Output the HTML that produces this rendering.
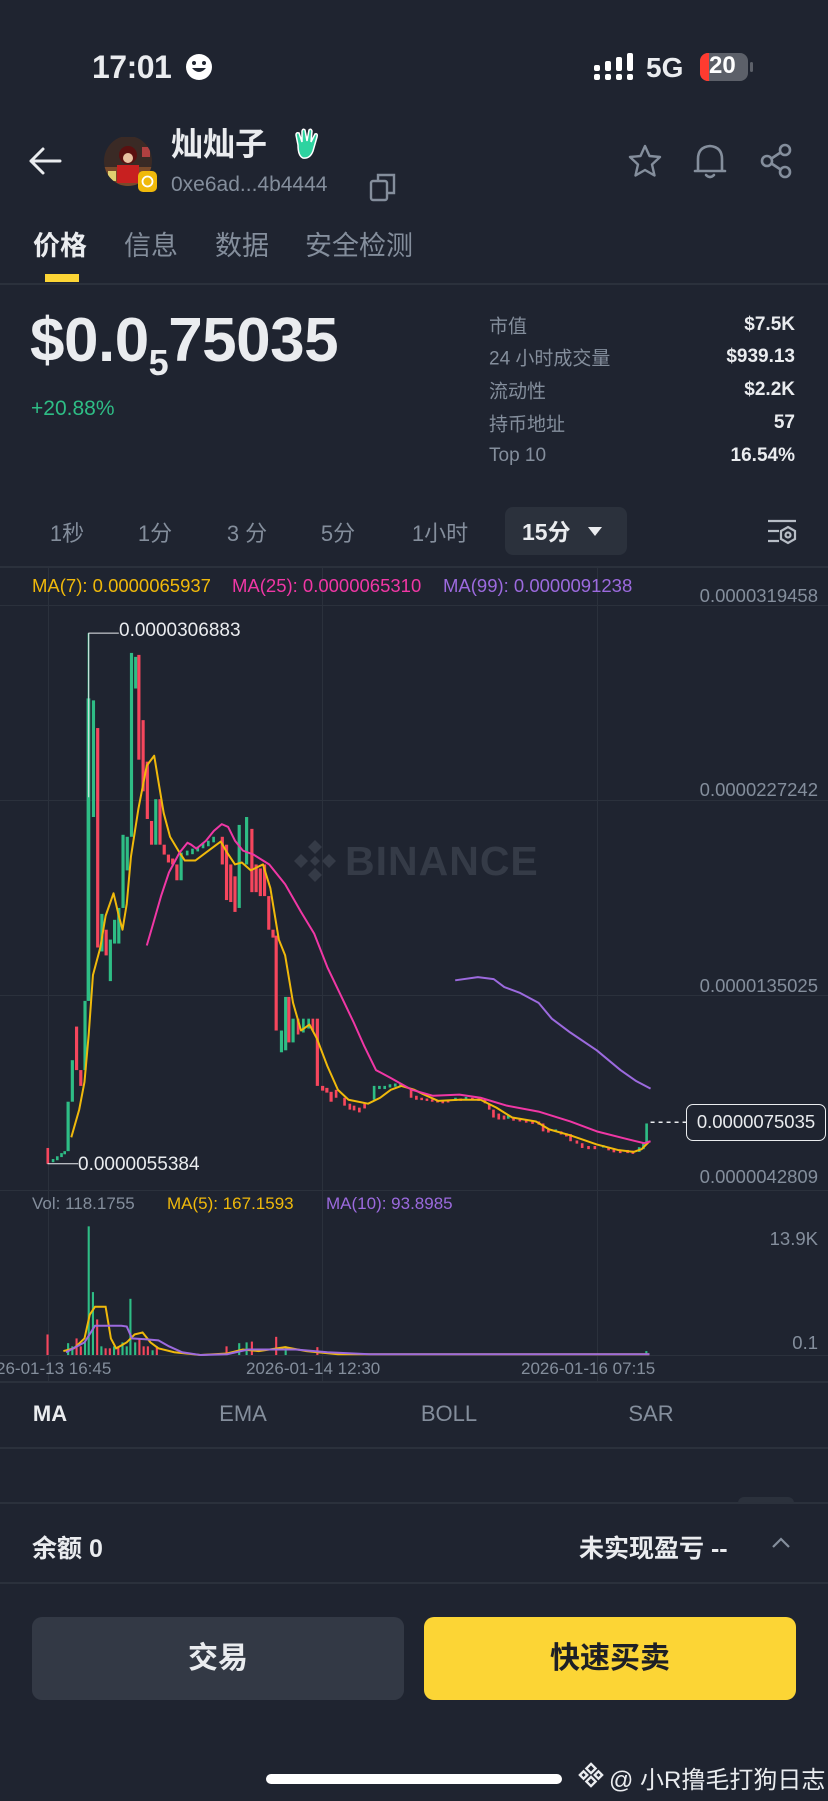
<!DOCTYPE html>
<html><head><meta charset="utf-8">
<style>
*{margin:0;padding:0;box-sizing:border-box}
body{width:828px;height:1801px;background:#1f2430;overflow:hidden;position:relative;font-family:"Liberation Sans","Noto Sans CJK SC",sans-serif;color:#eaecef}
.a{position:absolute;white-space:nowrap}
.g{color:#848e9c}
.line{position:absolute;left:0;width:828px;height:2px;background:#2b313c}
.lbl{position:absolute;left:489px;font-size:19px;color:#848e9c;transform:translateY(-50%)}
.val{position:absolute;right:33px;font-size:19px;color:#eaecef;transform:translateY(-50%);font-weight:bold}
.tf{position:absolute;top:532px;transform:translate(-50%,-50%);font-size:22px;color:#848e9c}
.ax{position:absolute;right:10px;font-size:18.5px;color:#848e9c;transform:translateY(-50%)}
.tab2{position:absolute;top:1414px;transform:translate(-50%,-50%);font-size:22px;color:#848e9c}
</style></head><body>

<!-- status bar -->
<div class="a" style="left:92px;top:49px;font-size:32px;font-weight:bold;letter-spacing:-0.5px">17:01</div>
<svg class="a" style="left:184px;top:52px" width="30" height="30" viewBox="0 0 30 30"><circle cx="15" cy="15" r="13" fill="#fff"/><circle cx="10" cy="11" r="2" fill="#1f2430"/><circle cx="20" cy="11" r="2" fill="#1f2430"/><path d="M8 16 Q15 24 22 16 Z" fill="#1f2430"/></svg>
<svg class="a" style="left:594px;top:53px" width="42" height="28" viewBox="0 0 42 28"><g fill="#fff"><rect x="0" y="12" width="6" height="6" rx="2"/><rect x="0" y="21" width="6" height="6" rx="2"/><rect x="11" y="8" width="6" height="10" rx="2"/><rect x="11" y="21" width="6" height="6" rx="2"/><rect x="22" y="4" width="6" height="14" rx="2"/><rect x="22" y="21" width="6" height="6" rx="2"/><rect x="33" y="0" width="6" height="18" rx="2"/><rect x="33" y="21" width="6" height="6" rx="2"/></g></svg>
<div class="a" style="left:646px;top:52px;font-size:28px;font-weight:bold">5G</div>
<div class="a" style="left:700px;top:53px;width:48px;height:28px;border-radius:8px;background:#5c6069;overflow:hidden"><div style="width:9px;height:28px;background:#ff3b30"></div></div>
<div class="a" style="left:709px;top:52px;font-size:24px;font-weight:bold;color:#fff">20</div>
<div class="a" style="left:750px;top:62px;width:3px;height:10px;border-radius:2px;background:#5c6069"></div>

<!-- header -->
<svg class="a" style="left:28px;top:146px" width="34" height="30" viewBox="0 0 34 30"><path d="M32 15H3M15 3L3 15L15 27" stroke="#eaecef" stroke-width="3" fill="none" stroke-linecap="round" stroke-linejoin="round"/></svg>
<svg class="a" style="left:104px;top:137px" width="56" height="56" viewBox="0 0 56 56"><defs><clipPath id="c"><ellipse cx="24" cy="24" rx="24" ry="25"/></clipPath></defs><g clip-path="url(#c)"><rect width="56" height="56" fill="#3a2a25"/><rect x="0" y="30" width="56" height="26" fill="#7a4a2a"/><circle cx="24" cy="18" r="9" fill="#5a1010"/><circle cx="24" cy="21" r="5" fill="#e7c0a0"/><rect x="13" y="28" width="22" height="18" fill="#c82020"/><rect x="4" y="34" width="8" height="10" fill="#e0d070"/><rect x="38" y="10" width="8" height="10" fill="#b04040"/></g><rect x="34" y="34" width="19" height="21" rx="5" fill="#f0b90b"/><circle cx="43.5" cy="44.5" r="5" fill="none" stroke="#fff" stroke-width="1.8"/></svg>
<div class="a" style="left:171px;top:119px;font-size:32px;font-weight:bold">灿灿子</div>
<svg class="a" style="left:293px;top:127px" width="30" height="34" viewBox="0 0 30 34"><path d="M5 18 L3 8 Q3 5 6 6 L9 15 L9 4 Q10 1 12 3 L14 14 L16 3 Q18 1 19 4 L18 15 L22 7 Q25 6 24 10 L20 24 Q17 32 10 31 Q5 29 5 18Z" fill="#2ed3a0" stroke="#fff" stroke-width="1.5"/></svg>
<div class="a g" style="left:171px;top:173px;font-size:21px">0xe6ad...4b4444</div>
<svg class="a" style="left:369px;top:172px" width="28" height="30" viewBox="0 0 28 30"><rect x="2" y="9" width="16" height="19" rx="2" fill="none" stroke="#848e9c" stroke-width="2.4"/><path d="M9 8V3h16v18h-6" fill="none" stroke="#848e9c" stroke-width="2.4"/></svg>
<svg class="a" style="left:627px;top:143px" width="36" height="36" viewBox="0 0 36 36"><path d="M18 3l4.5 10 10.5 1-8 7.5 2.5 11L18 27l-9.5 5.5 2.5-11-8-7.5 10.5-1z" fill="none" stroke="#848e9c" stroke-width="2.4" stroke-linejoin="round"/></svg>
<svg class="a" style="left:692px;top:141px" width="36" height="40" viewBox="0 0 36 40"><path d="M6 30V18Q6 6 18 5Q30 6 30 18V30H6ZM3 30H33M14 34Q18 38 22 34" fill="none" stroke="#848e9c" stroke-width="2.6" stroke-linejoin="round" stroke-linecap="round"/></svg>
<svg class="a" style="left:758px;top:141px" width="36" height="40" viewBox="0 0 36 40"><g fill="none" stroke="#848e9c" stroke-width="2.6"><circle cx="27" cy="9" r="5"/><circle cx="9" cy="20" r="5"/><circle cx="27" cy="31" r="5"/><path d="M13.5 17.5L22.5 11.5M13.5 22.5L22.5 28.5"/></g></svg>

<!-- tabs -->
<div class="a" style="left:33px;top:224px;font-size:27px;font-weight:bold">价格</div>
<div class="a g" style="left:124px;top:224px;font-size:27px">信息</div>
<div class="a g" style="left:215px;top:224px;font-size:27px">数据</div>
<div class="a g" style="left:305px;top:224px;font-size:27px">安全检测</div>
<div class="a" style="left:45px;top:274px;width:34px;height:8px;background:#fcd535"></div>
<div class="line" style="top:283px"></div>

<!-- price -->
<div class="a" style="left:30px;top:305px;font-size:62px;font-weight:bold;letter-spacing:-0.5px">$0.0<span style="font-size:36px;position:relative;top:14px">5</span>75035</div>
<div class="a" style="left:31px;top:397px;font-size:21px;color:#2ebd85">+20.88%</div>

<div class="lbl" style="top:325px">市值</div><div class="val" style="top:325px">$7.5K</div>
<div class="lbl" style="top:357px">24 小时成交量</div><div class="val" style="top:357px">$939.13</div>
<div class="lbl" style="top:390px">流动性</div><div class="val" style="top:390px">$2.2K</div>
<div class="lbl" style="top:423px">持币地址</div><div class="val" style="top:423px">57</div>
<div class="lbl" style="top:456px">Top 10</div><div class="val" style="top:456px">16.54%</div>

<!-- timeframe -->
<div class="tf" style="left:67px">1秒</div>
<div class="tf" style="left:155px">1分</div>
<div class="tf" style="left:247px">3 分</div>
<div class="tf" style="left:338px">5分</div>
<div class="tf" style="left:440px">1小时</div>
<div class="a" style="left:505px;top:507px;width:122px;height:48px;border-radius:8px;background:#2b313c"></div>
<div class="a" style="left:522px;top:517px;font-size:23px;font-weight:bold;line-height:30px">15分</div>
<svg class="a" style="left:587px;top:526px" width="16" height="12" viewBox="0 0 16 12"><path d="M1 1H15L8 10Z" fill="#eaecef"/></svg>
<svg class="a" style="left:766px;top:518px" width="32" height="30" viewBox="0 0 32 30"><g fill="none" stroke="#b7bdc6" stroke-width="2.2"><path d="M2 3H30M2 13H13M2 23H13"/><path d="M22 9l7 4v8l-7 4-7-4v-8z"/><circle cx="22" cy="17" r="2.5"/></g></svg>

<div class="line" style="top:566px;height:2px"></div>

<!-- grid + chart -->
<div class="a" style="left:48px;top:568px;width:1px;height:813px;background:#2b313c"></div>
<div class="a" style="left:322px;top:568px;width:1px;height:813px;background:#2b313c"></div>
<div class="a" style="left:597px;top:568px;width:1px;height:813px;background:#2b313c"></div>
<div class="line" style="top:605px;height:1px"></div>
<div class="line" style="top:800px;height:1px"></div>
<div class="line" style="top:995px;height:1px"></div>
<div class="line" style="top:1190px;height:1px"></div>
<div class="line" style="top:1355px;height:1px"></div>
<div class="line" style="top:1381px;height:2px"></div>

<svg class="a" style="left:292px;top:838px" width="46" height="46" viewBox="0 0 46 46"><g fill="#353b47"><path d="M23 2l7 7-7 7-7-7z"/><path d="M23 30l7 7-7 7-7-7z"/><path d="M9 16l7 7-7 7-7-7z"/><path d="M37 16l7 7-7 7-7-7z"/><path d="M23 18l5 5-5 5-5-5z"/></g></svg>
<div class="a" style="left:345px;top:838px;font-size:41px;font-weight:bold;color:#353b47;letter-spacing:1px">BINANCE</div>

<svg class="a" style="left:0;top:560px" width="828" height="620" viewBox="0 0 1568 1568" preserveAspectRatio="none">
<g stroke-width="2" vector-effect="non-scaling-stroke">
<g fill="#2ebd85">
<rect x="98" y="1515" width="5" height="8"/><rect x="106" y="1508" width="5" height="10"/><rect x="114" y="1500" width="5" height="10"/><rect x="120" y="1495" width="5" height="8"/>
<rect x="126" y="1370" width="6" height="125"/><rect x="134" y="1265" width="6" height="105"/><rect x="158" y="1115" width="6" height="175"/>
<rect x="166" y="185" width="3" height="930"/><rect x="164" y="350" width="7" height="765"/><rect x="174" y="355" width="6" height="295"/>
<rect x="190" y="895" width="6" height="95"/><rect x="206" y="960" width="6" height="105"/><rect x="214" y="910" width="6" height="60"/><rect x="222" y="880" width="6" height="90"/><rect x="230" y="695" width="6" height="185"/><rect x="238" y="700" width="6" height="85"/><rect x="246" y="235" width="6" height="465"/><rect x="254" y="245" width="6" height="80"/>
<rect x="292" y="605" width="6" height="115"/><rect x="340" y="740" width="6" height="70"/>
<rect x="352" y="735" width="5" height="12"/><rect x="362" y="730" width="5" height="14"/><rect x="372" y="725" width="5" height="12"/><rect x="382" y="715" width="5" height="14"/><rect x="392" y="710" width="5" height="14"/><rect x="402" y="700" width="5" height="14"/>
<rect x="450" y="670" width="6" height="210"/><rect x="464" y="650" width="6" height="120"/>
<rect x="530" y="1190" width="6" height="55"/><rect x="538" y="1105" width="6" height="135"/><rect x="552" y="1160" width="6" height="60"/><rect x="572" y="1160" width="5" height="35"/><rect x="582" y="1160" width="5" height="25"/>
<rect x="706" y="1330" width="5" height="35"/><rect x="716" y="1330" width="5" height="8"/><rect x="726" y="1330" width="5" height="8"/><rect x="736" y="1326" width="5" height="8"/><rect x="746" y="1324" width="5" height="8"/><rect x="756" y="1324" width="5" height="8"/>
<rect x="860" y="1360" width="5" height="8"/><rect x="880" y="1358" width="5" height="8"/><rect x="960" y="1405" width="5" height="8"/><rect x="1050" y="1440" width="5" height="6"/><rect x="1140" y="1480" width="5" height="6"/><rect x="1208" y="1485" width="5" height="12"/><rect x="1216" y="1475" width="5" height="15"/>
<rect x="1222" y="1425" width="5" height="50"/>
</g>
<g fill="#f6465d">
<rect x="88" y="1487" width="5" height="40"/><rect x="142" y="1180" width="6" height="110"/><rect x="150" y="1290" width="6" height="40"/>
<rect x="182" y="425" width="6" height="555"/><rect x="198" y="935" width="6" height="65"/>
<rect x="260" y="240" width="6" height="265"/><rect x="268" y="405" width="6" height="180"/><rect x="276" y="510" width="6" height="145"/><rect x="284" y="660" width="6" height="60"/><rect x="300" y="605" width="6" height="115"/><rect x="308" y="720" width="6" height="25"/><rect x="316" y="745" width="6" height="20"/><rect x="324" y="755" width="6" height="15"/><rect x="332" y="770" width="6" height="40"/>
<rect x="418" y="700" width="6" height="70"/><rect x="426" y="720" width="6" height="140"/><rect x="434" y="770" width="6" height="95"/><rect x="442" y="800" width="6" height="90"/><rect x="474" y="680" width="6" height="160"/><rect x="482" y="770" width="6" height="70"/><rect x="490" y="780" width="6" height="70"/><rect x="498" y="770" width="6" height="80"/><rect x="506" y="850" width="6" height="85"/><rect x="514" y="935" width="6" height="20"/><rect x="520" y="950" width="6" height="240"/>
<rect x="544" y="1105" width="6" height="115"/><rect x="562" y="1160" width="5" height="40"/><rect x="590" y="1160" width="5" height="30"/><rect x="598" y="1160" width="6" height="170"/>
<rect x="608" y="1330" width="6" height="12"/><rect x="616" y="1335" width="6" height="12"/><rect x="624" y="1345" width="6" height="25"/><rect x="634" y="1340" width="5" height="20"/>
<rect x="650" y="1360" width="5" height="20"/><rect x="660" y="1375" width="5" height="15"/><rect x="668" y="1380" width="5" height="12"/><rect x="678" y="1385" width="5" height="12"/><rect x="688" y="1375" width="5" height="12"/>
<rect x="776" y="1340" width="5" height="20"/><rect x="786" y="1355" width="5" height="10"/><rect x="796" y="1360" width="5" height="6"/><rect x="806" y="1362" width="5" height="6"/><rect x="816" y="1364" width="5" height="6"/><rect x="826" y="1366" width="5" height="6"/><rect x="836" y="1368" width="5" height="6"/><rect x="846" y="1366" width="5" height="6"/><rect x="870" y="1362" width="5" height="6"/><rect x="892" y="1360" width="5" height="6"/><rect x="904" y="1362" width="5" height="6"/><rect x="916" y="1362" width="5" height="12"/>
<rect x="924" y="1375" width="5" height="15"/><rect x="932" y="1390" width="5" height="20"/><rect x="942" y="1400" width="5" height="15"/><rect x="952" y="1405" width="5" height="10"/><rect x="970" y="1410" width="5" height="8"/><rect x="982" y="1412" width="5" height="8"/><rect x="994" y="1415" width="5" height="8"/><rect x="1006" y="1418" width="5" height="8"/><rect x="1018" y="1420" width="5" height="8"/><rect x="1026" y="1425" width="5" height="20"/><rect x="1036" y="1440" width="5" height="8"/><rect x="1060" y="1445" width="5" height="8"/><rect x="1070" y="1450" width="5" height="8"/><rect x="1078" y="1452" width="5" height="18"/><rect x="1090" y="1468" width="5" height="8"/><rect x="1100" y="1475" width="5" height="12"/><rect x="1112" y="1482" width="5" height="8"/><rect x="1124" y="1482" width="5" height="8"/><rect x="1150" y="1485" width="5" height="8"/><rect x="1160" y="1488" width="5" height="10"/><rect x="1172" y="1492" width="5" height="8"/><rect x="1186" y="1492" width="5" height="8"/><rect x="1196" y="1494" width="5" height="8"/>
</g>
<g fill="none" stroke-linejoin="round">
<polyline vector-effect="non-scaling-stroke" stroke="#f0b90b" stroke-width="2" points="135,1460 150,1390 160,1320 168,1200 176,1050 190,980 200,900 215,843 225,900 232,935 240,870 248,750 262,630 278,520 292,495 300,560 310,640 322,700 340,740 350,760 370,760 390,740 418,712 430,740 445,770 458,765 475,785 490,775 498,770 512,830 528,960 540,1000 555,1120 570,1190 586,1175 600,1210 620,1280 640,1340 660,1365 697,1375 720,1360 740,1340 760,1330 785,1340 800,1350 830,1368 870,1365 910,1365 940,1385 970,1410 1015,1420 1040,1440 1080,1455 1130,1478 1170,1492 1200,1497 1215,1490 1230,1470"/>
<polyline vector-effect="non-scaling-stroke" stroke="#f037a5" stroke-width="2" points="278,975 290,920 305,850 320,790 340,740 355,715 362,720 372,730 390,710 405,685 420,668 432,675 445,710 460,735 480,745 510,770 540,820 570,890 595,945 620,1030 645,1100 670,1170 690,1230 712,1290 740,1310 780,1340 820,1355 870,1352 910,1360 960,1380 1020,1395 1080,1420 1130,1445 1180,1462 1220,1475 1232,1470"/>
<polyline vector-effect="non-scaling-stroke" stroke="#9c6ade" stroke-width="2" points="862,1063 905,1055 935,1060 955,1080 985,1095 1020,1120 1045,1160 1080,1195 1130,1240 1175,1290 1205,1318 1232,1337"/>
<polyline vector-effect="non-scaling-stroke" stroke="#eaecef" stroke-width="1" points="168,600 168,185 225,185"/>
<polyline vector-effect="non-scaling-stroke" stroke="#eaecef" stroke-width="1" points="90,1527 148,1527"/>
<line vector-effect="non-scaling-stroke" stroke="#eaecef" stroke-width="1.5" stroke-dasharray="4 4" x1="1232" y1="1422" x2="1300" y2="1422"/>
</g>
</g>
</svg>
<div class="a" style="left:119px;top:620px;font-size:19px">0.0000306883</div>
<div class="a" style="left:78px;top:1154px;font-size:19px">0.0000055384</div>

<div class="a" style="left:32px;top:575px;font-size:18.5px;color:#f0b90b">MA(7): 0.0000065937</div>
<div class="a" style="left:232px;top:575px;font-size:18.5px;color:#f037a5">MA(25): 0.0000065310</div>
<div class="a" style="left:443px;top:575px;font-size:18.5px;color:#9c6ade">MA(99): 0.0000091238</div>

<div class="ax" style="top:596px">0.0000319458</div>
<div class="ax" style="top:790px">0.0000227242</div>
<div class="ax" style="top:986px">0.0000135025</div>
<div class="ax" style="top:1177px">0.0000042809</div>
<div class="a" style="left:686px;top:1104px;width:140px;height:37px;border:1.5px solid #eaecef;border-radius:7px;background:#1f2430;font-size:18.5px;text-align:center;line-height:34px">0.0000075035</div>

<!-- volume -->
<div class="a g" style="left:32px;top:1194px;font-size:17px">Vol: 118.1755</div>
<div class="a" style="left:167px;top:1194px;font-size:17px;color:#f0b90b">MA(5): 167.1593</div>
<div class="a" style="left:326px;top:1194px;font-size:17px;color:#9c6ade">MA(10): 93.8985</div>
<div class="ax" style="top:1239px">13.9K</div>
<div class="ax" style="top:1343px">0.1</div>
<svg class="a" style="left:0;top:1180px" width="828" height="621" viewBox="0 0 1568 1568" preserveAspectRatio="none">
<g fill="#2ebd85"><rect x="127" y="412" width="4" height="30"/><rect x="135" y="420" width="4" height="22"/><rect x="159" y="410" width="4" height="32"/><rect x="166" y="117" width="4" height="325"/><rect x="174" y="283" width="4" height="159"/><rect x="190" y="420" width="4" height="22"/><rect x="214" y="420" width="4" height="22"/><rect x="230" y="410" width="4" height="32"/><rect x="238" y="420" width="4" height="22"/><rect x="245" y="300" width="4" height="142"/><rect x="254" y="410" width="4" height="32"/><rect x="287" y="430" width="4" height="12"/><rect x="451" y="412" width="4" height="30"/><rect x="465" y="410" width="4" height="32"/><rect x="539" y="420" width="4" height="22"/><rect x="1222" y="432" width="4" height="10"/></g>
<g fill="#f6465d"><rect x="88" y="390" width="4" height="52"/><rect x="143" y="400" width="4" height="42"/><rect x="151" y="420" width="4" height="22"/><rect x="182" y="352" width="4" height="90"/><rect x="198" y="425" width="4" height="17"/><rect x="206" y="425" width="4" height="17"/><rect x="222" y="420" width="4" height="22"/><rect x="262" y="400" width="4" height="42"/><rect x="270" y="420" width="4" height="22"/><rect x="278" y="420" width="4" height="22"/><rect x="295" y="420" width="4" height="22"/><rect x="427" y="420" width="4" height="22"/><rect x="475" y="408" width="4" height="34"/><rect x="521" y="396" width="4" height="46"/><rect x="599" y="422" width="4" height="20"/></g>
<g fill="none" stroke-width="2">
<polyline vector-effect="non-scaling-stroke" stroke="#f0b90b" points="120,432 140,425 160,400 170,340 180,320 200,320 210,400 220,425 240,410 255,390 270,385 285,410 300,425 330,435 380,442 430,438 460,428 490,432 540,422 580,432 640,440 1230,440"/>
<polyline vector-effect="non-scaling-stroke" stroke="#9c6ade" points="125,435 160,410 180,368 200,368 230,368 240,370 250,400 275,402 300,405 320,420 345,435 380,442 430,440 470,428 520,428 560,428 620,435 700,440 1230,440"/>
</g></svg>
<div class="a g" style="left:-4px;top:1359px;font-size:17px">26-01-13 16:45</div>
<div class="a g" style="left:246px;top:1359px;font-size:17px">2026-01-14 12:30</div>
<div class="a g" style="left:521px;top:1359px;font-size:17px">2026-01-16 07:15</div>

<!-- indicator tabs -->
<div class="tab2" style="left:50px;color:#eaecef;font-weight:bold">MA</div>
<div class="tab2" style="left:243px">EMA</div>
<div class="tab2" style="left:449px">BOLL</div>
<div class="tab2" style="left:651px">SAR</div>
<div class="line" style="top:1447px"></div>
<div class="line" style="top:1502px"></div>
<div class="a" style="left:738px;top:1497px;width:56px;height:6px;border-radius:6px 6px 0 0;background:#2b313c"></div>

<div class="a" style="left:32px;top:1529px;font-size:25px;font-weight:bold">余额 0</div>
<div class="a" style="left:579px;top:1529px;font-size:25px;font-weight:bold">未实现盈亏 --</div>
<svg class="a" style="left:771px;top:1535px" width="20" height="14" viewBox="0 0 20 14"><path d="M2 12L10 4L18 12" fill="none" stroke="#848e9c" stroke-width="2.2"/></svg>
<div class="line" style="top:1582px"></div>

<div class="a" style="left:32px;top:1617px;width:372px;height:83px;border-radius:10px;background:#333945;text-align:center;line-height:83px;font-size:30px;font-weight:bold">交易</div>
<div class="a" style="left:424px;top:1617px;width:372px;height:83px;border-radius:10px;background:#fcd535;text-align:center;line-height:83px;font-size:30px;font-weight:bold;color:#1e2026">快速买卖</div>

<div class="a" style="left:266px;top:1774px;width:296px;height:10px;border-radius:5px;background:#fff"></div>
<svg class="a" style="left:578px;top:1762px" width="26" height="26" viewBox="0 0 28 28"><g fill="none" stroke="#eaecef" stroke-width="2.5"><path d="M14 2l5 5-5 5-5-5z"/><path d="M14 16l5 5-5 5-5-5z"/><path d="M2 14l4-4 4 4-4 4z"/><path d="M18 14l4-4 4 4-4 4z"/></g></svg>
<div class="a" style="left:609px;top:1760px;font-size:24px;color:#eaecef">@ 小R撸毛打狗日志</div>
</body></html>
